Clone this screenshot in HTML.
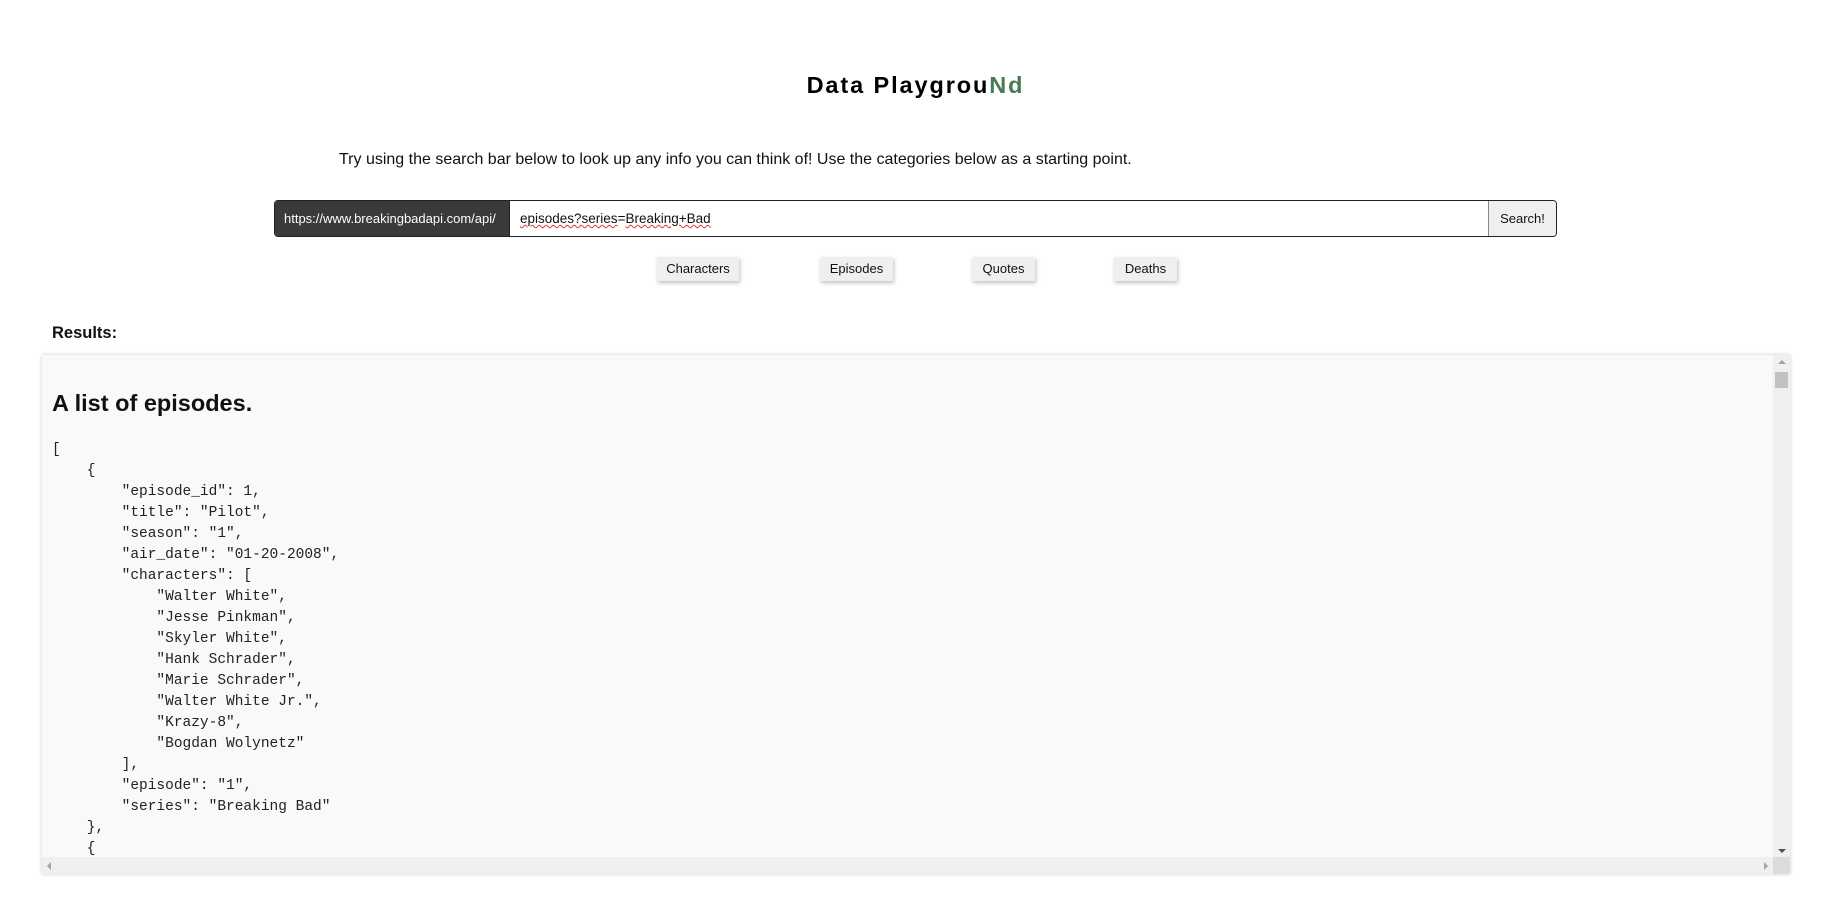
<!DOCTYPE html>
<html><head><meta charset="utf-8"><style>
*{box-sizing:border-box;margin:0;padding:0}
body{width:1823px;height:906px;background:#fff;font-family:"Liberation Sans",sans-serif;color:#111;position:relative;overflow:hidden}
.t{position:absolute;left:4px;width:1823px;text-align:center;top:72px;font-size:23.5px;font-weight:bold;letter-spacing:1.9px;color:#000}
.t span{color:#4a7a52}
.p{position:absolute;left:339px;top:151px;font-size:16px;color:#111}
.bar{position:absolute;left:274px;top:200px;width:1283px;height:37px;border:1px solid #222;border-radius:4px;overflow:hidden;display:flex}
.pre{width:234px;background:#3a3a3a;color:#fff;font-size:13px;line-height:35px;padding-left:9px}
.in{flex:1;font-size:13.5px;line-height:35px;padding-left:10px;color:#111;border-left:1px solid #222}
.in u{text-decoration:underline wavy #d33;text-decoration-thickness:1px}
.go{width:68px;background:#efefef;border-left:1px solid #888;font-size:13px;line-height:35px;text-align:center}
.b{position:absolute;top:257px;height:24px;background:#efefef;font-size:13px;line-height:24px;text-align:center;box-shadow:1px 2px 4px rgba(0,0,0,.25)}
.r{position:absolute;left:52px;top:324px;font-size:16.5px;font-weight:bold}
.box{position:absolute;left:42px;top:355px;width:1748px;height:519px;background:#f9f9f9;box-shadow:0 0 4px rgba(0,0,0,.2);overflow:hidden}
.box h2{position:absolute;left:10px;top:35px;font-size:23.5px;font-weight:bold}
.box pre{position:absolute;left:10px;top:85px;font-family:"Liberation Mono",monospace;font-size:14.5px;line-height:21px;color:#222}
.vs{position:absolute;right:0;top:0;width:17px;height:502px;background:#f0f0f0}
.th{position:absolute;left:2px;top:17px;width:13px;height:16px;background:#c1c1c1}
.hs{position:absolute;left:0;bottom:0;width:1731px;height:17px;background:#f0f0f0}
.cr{position:absolute;right:0;bottom:0;width:17px;height:17px;background:#dcdcdc}
.ar{position:absolute;width:0;height:0}
</style></head><body>
<div class="t">Data Playgrou<span>Nd</span></div>
<div class="p">Try using the search bar below to look up any info you can think of! Use the categories below as a starting point.</div>
<div class="bar"><div class="pre">https://www.breakingbadapi.com/api/</div><div class="in"><u>episodes?series</u>=<u>Breaking+Bad</u></div><div class="go">Search!</div></div>
<div class="b" style="left:657px;width:82px">Characters</div>
<div class="b" style="left:820px;width:73px">Episodes</div>
<div class="b" style="left:972px;width:63px">Quotes</div>
<div class="b" style="left:1114px;width:63px">Deaths</div>
<div class="r">Results:</div>
<div class="box">
<h2>A list of episodes.</h2>
<pre>[
    {
        "episode_id": 1,
        "title": "Pilot",
        "season": "1",
        "air_date": "01-20-2008",
        "characters": [
            "Walter White",
            "Jesse Pinkman",
            "Skyler White",
            "Hank Schrader",
            "Marie Schrader",
            "Walter White Jr.",
            "Krazy-8",
            "Bogdan Wolynetz"
        ],
        "episode": "1",
        "series": "Breaking Bad"
    },
    {</pre>
<div class="vs"><div class="ar" style="left:5px;top:5px;border:4px solid transparent;border-bottom:4px solid #a3a3a3;border-top:0"></div><div class="th"></div><div class="ar" style="left:5px;bottom:4px;border:4px solid transparent;border-top:4px solid #505050;border-bottom:0"></div></div>
<div class="hs"><div class="ar" style="left:5px;top:5px;border:4px solid transparent;border-right:4px solid #a3a3a3;border-left:0"></div><div class="ar" style="right:5px;top:5px;border:4px solid transparent;border-left:4px solid #a3a3a3;border-right:0"></div></div>
<div class="cr"></div>
</div>
</body></html>
